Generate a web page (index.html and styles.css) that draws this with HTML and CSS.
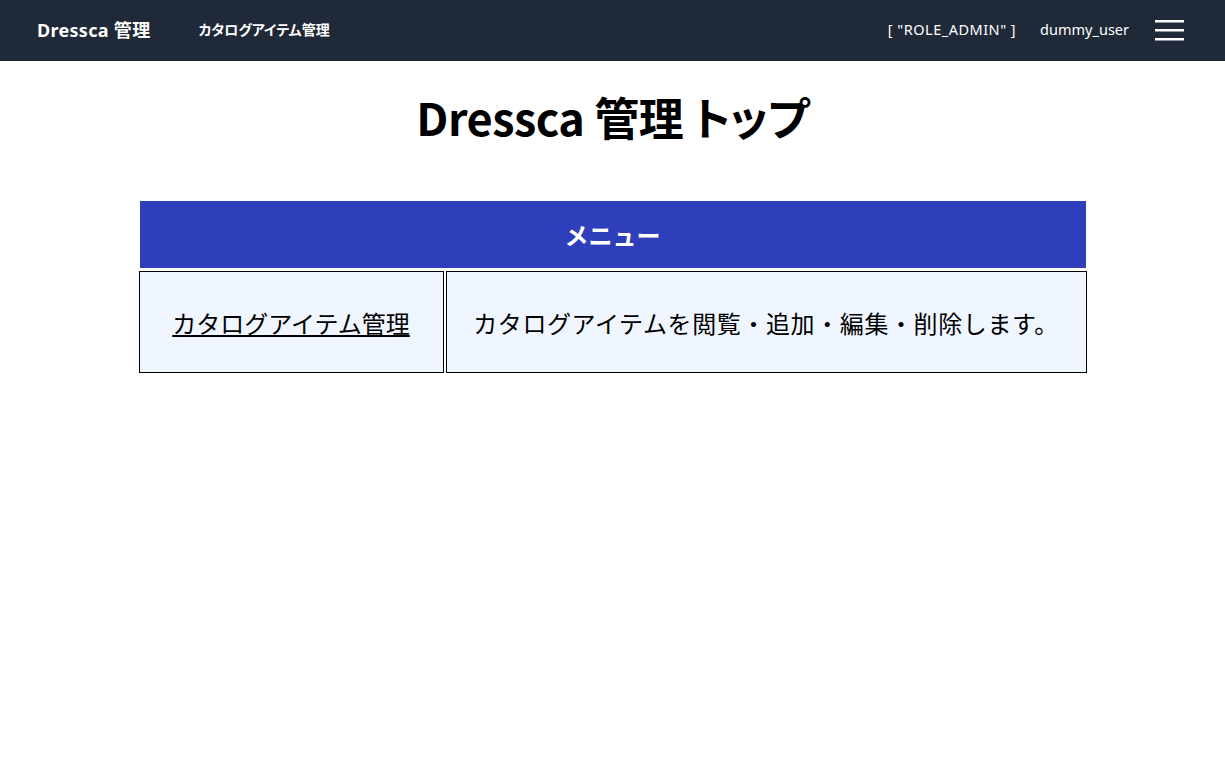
FILE: index.html
```html
<!DOCTYPE html>
<html lang="ja">
<head>
    <meta charset="UTF-8">
    <meta name="viewport" content="width=device-width, initial-scale=1.0">
    <title>Dressca 管理</title>
    <link rel="stylesheet" href="styles.css">
</head>
<body>
    <header>
        <div class="header-content">
            <div class="header-left">
                <a class="brand" href="#">Dressca 管理</a>
                <a class="nav-link" href="#">カタログアイテム管理</a>
            </div>
            <div class="header-right">
                <span class="roles">[ "ROLE_ADMIN" ]</span>
                <span class="user">dummy_user</span>
                <div class="menu-icon">
                    <svg width="29" height="21" viewBox="0 0 29 21">
                        <rect x="0" y="0" width="29" height="2.5" fill="#fff"/>
                        <rect x="0" y="9" width="29" height="2.5" fill="#fff"/>
                        <rect x="0" y="18" width="29" height="2.5" fill="#fff"/>
                    </svg>
                </div>
            </div>
        </div>
    </header>
    <main>
        <h1>Dressca 管理 トップ</h1>
        <table class="menu-table">
            <thead>
                <tr>
                    <th colspan="2">メニュー</th>
                </tr>
            </thead>
            <tbody>
                <tr>
                    <td class="link-cell"><a href="#">カタログアイテム管理</a></td>
                    <td class="desc-cell">カタログアイテムを閲覧・追加・編集・削除します。</td>
                </tr>
            </tbody>
        </table>
    </main>
</body>
</html>
```

FILE: styles.css
```css
body {
    font-family: "Noto Sans", "Noto Sans CJK JP", sans-serif;
    margin: 0;
    padding: 0;
    background-color: #fff;
    color: black;
}
header {
    background-color: #1f2937;
    height: 61px;
}
.header-content {
    height: 100%;
    box-sizing: border-box;
    padding: 0 41px 4px 37px;
    display: flex;
    justify-content: space-between;
    align-items: center;
    font-feature-settings: "palt";
}
.header-left {
    display: flex;
    align-items: center;
    gap: 48px;
}
.brand {
    color: #fff;
    text-decoration: none;
    font-weight: bold;
    font-size: 18px;
    letter-spacing: 0.3px;
}
.nav-link {
    color: #fff;
    text-decoration: none;
    font-weight: bold;
    font-size: 14px;
}
.header-right {
    display: flex;
    align-items: center;
    color: #fff;
    font-size: 14.5px;
}
.roles {
    margin-right: 24px;
    letter-spacing: 0.5px;
}
.user {
    margin-right: 26px;
}
.menu-icon {
    display: flex;
    align-items: center;
    padding-top: 4px;
}
main {
    padding-top: 28px;
}
h1 {
    margin: 0 0 53px;
    text-align: center;
    font-family: "Noto Sans CJK JP", sans-serif;
    font-feature-settings: "palt";
    font-size: 45px;
    font-weight: bold;
    letter-spacing: -0.5px;
    line-height: 1.25;
}
.menu-table {
    width: 952px;
    margin: 0 auto;
    border-collapse: separate;
    border-spacing: 2px;
}
.menu-table th {
    background-color: #2f3fbc;
    color: #fff;
    font-size: 24px;
    font-weight: bold;
    height: 67px;
    padding: 0;
    border: 1px solid #fff;
}
.menu-table td {
    background-color: #eff6ff;
    border: 1px solid black;
    font-size: 24px;
    height: 100px;
    padding: 0;
    text-align: center;
}
.link-cell {
    width: 303px;
}
.link-cell a {
    color: black;
    text-decoration: underline;
}
.desc-cell {
    letter-spacing: 0.6px;
}
```
